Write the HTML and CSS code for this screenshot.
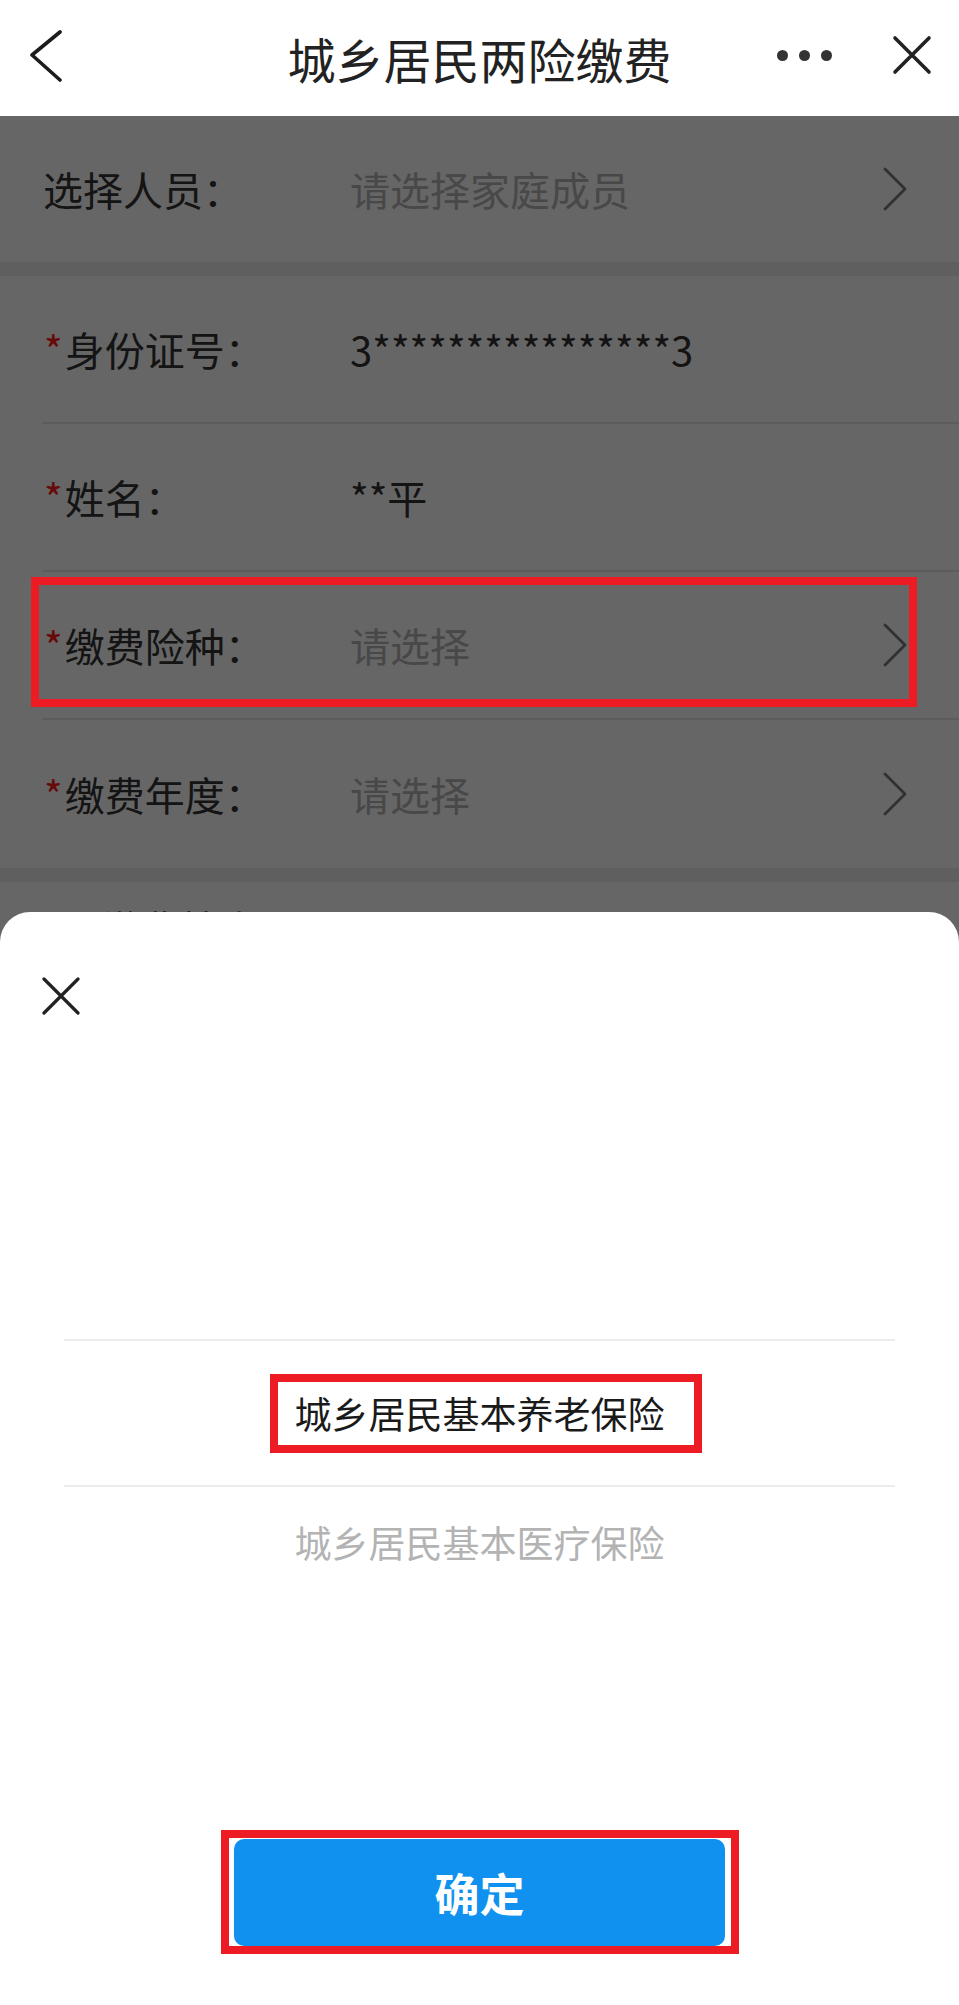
FILE: index.html
```html
<!DOCTYPE html>
<html lang="zh-CN">
<head>
<meta charset="utf-8">
<title>城乡居民两险缴费</title>
<link rel="stylesheet" href="styles.css">
</head>
<body>
<div class="app">
  <header class="nav">
    <div class="nav-left">
      <svg class="icon-back" viewBox="0 0 36 56" width="36" height="56"><polyline points="31,2 3,25 31,50"/></svg>
    </div>
    <h1 class="nav-title">城乡居民两险缴费</h1>
    <div class="nav-right">
      <span class="dots"><i></i><i></i><i></i></span>
      <svg class="icon-close" viewBox="0 0 40 40" width="40" height="40"><path d="M3 3 L37 37 M37 3 L3 37"/></svg>
    </div>
  </header>

  <main class="page">
    <section class="group">
      <div class="row row-first">
        <span class="label">选择人员：</span>
        <span class="value placeholder">请选择家庭成员</span>
        <svg class="chev" viewBox="0 0 26 44" width="26" height="44"><polyline points="3,2 23,22 3,42"/></svg>
      </div>
    </section>

    <section class="group">
      <div class="row">
        <span class="label"><em class="req">*</em>身份证号：</span>
        <span class="value">3****************3</span>
      </div>
      <div class="row">
        <span class="label"><em class="req">*</em>姓名：</span>
        <span class="value">**平</span>
      </div>
      <div class="row marked">
        <span class="label"><em class="req">*</em>缴费险种：</span>
        <span class="value placeholder">请选择</span>
        <svg class="chev" viewBox="0 0 26 44" width="26" height="44"><polyline points="3,2 23,22 3,42"/></svg>
      </div>
      <div class="row">
        <span class="label"><em class="req">*</em>缴费年度：</span>
        <span class="value placeholder">请选择</span>
        <svg class="chev" viewBox="0 0 26 44" width="26" height="44"><polyline points="3,2 23,22 3,42"/></svg>
      </div>
    </section>

    <section class="group">
      <div class="row row-peek">
        <span class="label"><em class="req">*</em>缴费档次：</span>
      </div>
    </section>

    <div class="mask"></div>

    <div class="sheet">
      <svg class="sheet-close" viewBox="0 0 38 38" width="38" height="38"><path d="M2 2 L36 36 M36 2 L2 36"/></svg>
      <div class="picker">
        <div class="pick-item selected"><span class="pick-text">城乡居民基本养老保险</span></div>
        <div class="pick-item"><span class="pick-text">城乡居民基本医疗保险</span></div>
      </div>
      <button class="confirm" type="button">确定</button>
    </div>
  </main>
</div>
</body>
</html>
```

FILE: styles.css
```css
* { box-sizing: border-box; }

html, body {
  margin: 0;
  padding: 0;
  background: #ffffff;
  overflow: hidden;
}

.app {
  width: 959px;
  height: 2005px;
  display: flex;
  flex-direction: column;
  font-family: "Noto Sans CJK SC", "Noto Sans", sans-serif;
  color: #333333;
}

/* ---------- navigation bar ---------- */
.nav {
  height: 116px;
  flex: none;
  display: grid;
  grid-template-columns: 1fr auto 1fr;
  align-items: center;
  background: #ffffff;
}

.nav-left {
  padding-left: 29px;
  display: flex;
  align-items: center;
}

.icon-back polyline {
  fill: none;
  stroke: #1c1c1c;
  stroke-width: 3.6;
  stroke-linecap: round;
  stroke-linejoin: round;
}

.nav-title {
  margin: 0;
  font-size: 48px;
  line-height: 1;
  font-weight: 400;
  color: #222222;
  white-space: nowrap;
}

.nav-right {
  display: flex;
  justify-content: flex-end;
  align-items: center;
  gap: 60px;
  padding-right: 27px;
  margin-bottom: 6px;
}

.dots {
  display: flex;
  gap: 11px;
}

.dots i {
  width: 11px;
  height: 11px;
  border-radius: 50%;
  background: #333333;
}

.icon-close path {
  fill: none;
  stroke: #222222;
  stroke-width: 3.6;
  stroke-linecap: round;
}

/* ---------- page (under the mask) ---------- */
.page {
  position: relative;
  flex: 1;
  background: #eeeeee;
  overflow: hidden;
}

.group {
  background: #ffffff;
  margin-bottom: 14px;
}

.row {
  position: relative;
  height: 148px;
  margin-left: 43px;
  padding-right: 51px;
  display: flex;
  align-items: center;
  border-bottom: 2px solid #e6e6e6;
  font-size: 40px;
  line-height: 1.4;
}

.group .row:last-child {
  border-bottom: none;
}

.row-first {
  height: 146px;
}

.label {
  flex: none;
  width: 307px;
  color: #333333;
  white-space: nowrap;
}

.req {
  font-style: normal;
  color: #ff1a1a;
  margin-left: 1px;
  margin-right: 2px;
}

.value {
  flex: 1;
  color: #333333;
  white-space: nowrap;
}

.value.placeholder {
  color: #b4b4b4;
}

.chev {
  flex: none;
}

.chev polyline {
  fill: none;
  stroke: #7a7a7a;
  stroke-width: 2.8;
  stroke-linecap: round;
  stroke-linejoin: round;
}

.row-peek {
  margin-left: 78px;
  align-items: flex-start;
  padding-top: 18px;
}

/* red annotation around a form row */
.row.marked::after {
  content: "";
  position: absolute;
  left: -12px;
  right: 42px;
  top: 5px;
  bottom: 11px;
  border: 8px solid #ed1c24;
  z-index: 5;
  pointer-events: none;
}

/* ---------- mask ---------- */
.mask {
  position: absolute;
  inset: 0;
  background: rgba(0, 0, 0, 0.6);
  z-index: 2;
}

/* ---------- bottom sheet ---------- */
.sheet {
  position: absolute;
  left: 0;
  right: 0;
  bottom: 0;
  height: 1093px;
  background: #ffffff;
  border-radius: 30px 30px 0 0;
  z-index: 3;
  display: flex;
  flex-direction: column;
}

.sheet-close {
  flex: none;
  margin: 65px 0 0 42px;
}

.sheet-close path {
  fill: none;
  stroke: #222222;
  stroke-width: 3.2;
  stroke-linecap: round;
}

.picker {
  margin: 324px 64px 0;
}

.pick-item {
  display: flex;
  align-items: center;
  justify-content: center;
  height: 110px;
  font-size: 37px;
  color: #b3b3b3;
}

.pick-item.selected {
  height: 148px;
  border-top: 2px solid #ececec;
  border-bottom: 2px solid #ececec;
  color: #1a1a1a;
}

.pick-text {
  position: relative;
  display: inline-block;
  line-height: 1;
  white-space: nowrap;
}

.pick-item.selected .pick-text::after {
  content: "";
  position: absolute;
  left: -25px;
  right: -37px;
  top: -21px;
  bottom: -21px;
  border: 8px solid #ed1c24;
  pointer-events: none;
}

.confirm {
  position: relative;
  flex: none;
  width: 491px;
  height: 107px;
  margin: auto auto 59px;
  padding: 0;
  border: none;
  border-radius: 10px;
  background: #1191ef;
  color: #ffffff;
  font-family: "Noto Sans CJK SC", "Noto Sans", sans-serif;
  font-size: 45px;
  font-weight: 700;
  line-height: 1;
}

.confirm::after {
  content: "";
  position: absolute;
  left: -13px;
  right: -14px;
  top: -9px;
  bottom: -8px;
  border: 8px solid #ed1c24;
  pointer-events: none;
}
```
